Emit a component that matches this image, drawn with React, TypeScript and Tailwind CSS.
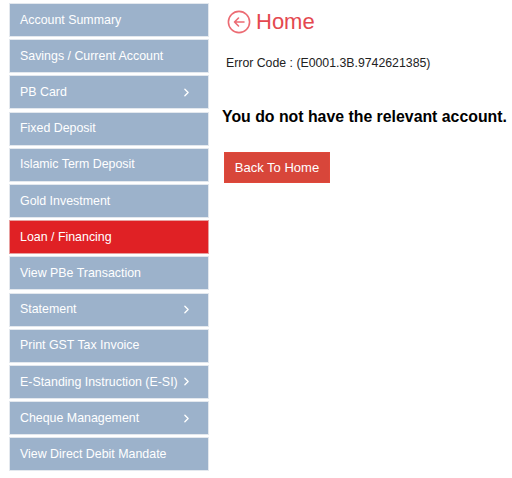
import { ChevronRight } from "lucide-react";

const menu = [
    { label: "Account Summary" },
    { label: "Savings / Current Account" },
    { label: "PB Card", sub: true },
    { label: "Fixed Deposit" },
    { label: "Islamic Term Deposit" },
    { label: "Gold Investment" },
    { label: "Loan / Financing", active: true },
    { label: "View PBe Transaction" },
    { label: "Statement", sub: true },
    { label: "Print GST Tax Invoice" },
    { label: "E-Standing Instruction (E-SI)", sub: true },
    { label: "Cheque Management", sub: true },
    { label: "View Direct Debit Mandate" },
];

export default function App() {
    return (
        <div className="flex w-[512px] h-[478px] bg-white" style={{ fontFamily: "Arial, 'Liberation Sans', sans-serif" }}>
            <div className="flex flex-col gap-[2.2px] pl-[9px] pt-[3px] w-[209px] shrink-0">
                {menu.map((item) => (
                    <div
                        key={item.label}
                        className={`flex items-center justify-between h-[34px] pl-[10px] pr-[15px] border text-[12.4px] whitespace-nowrap ${
                            item.active
                                ? "bg-[#e02125] border-[#e8a0a0] text-white"
                                : "bg-[#9cb2cb] border-[#e3e8ee] text-white"
                        }`}
                    >
                        <span>{item.label}</span>
                        {item.sub && <ChevronRight size={13} strokeWidth={2.5} className="shrink-0" />}
                    </div>
                ))}
            </div>

            <div className="flex flex-col pl-[13px] pt-[10px]">
                <div className="flex items-center gap-[5px] pl-[5px]">
                    <svg width="24" height="24" viewBox="0 0 24 24" fill="none" stroke="#ec6b73" strokeWidth="1.6" strokeLinecap="round" strokeLinejoin="round">
                        <circle cx="12" cy="12" r="10.6" />
                        <path d="M17 12H7.5M11.5 8l-4 4 4 4" />
                    </svg>
                    <span className="text-[22px] leading-none text-[#e4484f]">Home</span>
                </div>
                <div className="mt-[20px] pl-[4px] text-[12.3px] text-[#222]">Error Code : (E0001.3B.9742621385)</div>
                <div className="mt-[33px] text-[15.85px] font-bold text-black">You do not have the relevant account.</div>
                <div className="mt-[23px] pl-[2px]">
                    <button className="h-[31px] w-[106px] bg-[#d8463a] border border-[#e0483a] text-white text-[13px]">
                        Back To Home
                    </button>
                </div>
            </div>
        </div>
    );
}
